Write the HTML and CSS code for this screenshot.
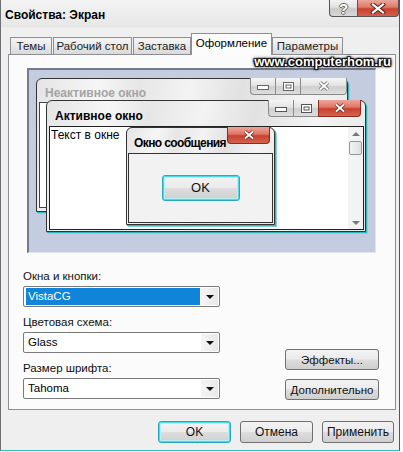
FILE: index.html
```html
<!DOCTYPE html>
<html lang="ru">
<head>
<meta charset="utf-8">
<link rel="stylesheet" href="styles.css">
</head>
<body>
<div class="window">
  <div class="titlebar">
    <span class="title">Свойства: Экран</span>
    <div class="caption">
      <span class="cap help">?</span>
      <span class="cap close">
        <svg width="16" height="11" viewBox="0 0 16 11"><path d="M3 1.5L13 9.5M13 1.5L3 9.5" stroke="#5a2a22" stroke-width="4.2" stroke-linecap="square" fill="none"/><path d="M3 1.5L13 9.5M13 1.5L3 9.5" stroke="#ffffff" stroke-width="2.2" stroke-linecap="square" fill="none"/></svg>
      </span>
    </div>
  </div>
  <div class="client">
    <div class="tabs">
      <span class="tab t1">Темы</span>
      <span class="tab t2">Рабочий стол</span>
      <span class="tab t3">Заставка</span>
      <span class="tab t4 tab-on">Оформление</span>
      <span class="tab t5">Параметры</span>
    </div>
    <div class="panel">
      <div class="watermark">www.computerhom.ru</div>
      <div class="preview">
        <div class="pw pw-inactive">
          <div class="pw-title">Неактивное окно</div>
          <div class="pw-btns">
            <span class="pb min"><svg width="12" height="6" viewBox="0 0 12 6"><rect x="0.5" y="0.5" width="11" height="4" fill="#fff" stroke="#666"/></svg></span>
            <span class="pb max"><svg width="11" height="9" viewBox="0 0 11 9"><rect x="0.5" y="0.5" width="10" height="8" fill="#fff" stroke="#666"/><rect x="3" y="3" width="5" height="3" fill="none" stroke="#666"/></svg></span>
            <span class="pb cls"><svg width="14" height="10" viewBox="0 0 14 10"><path d="M3 1.5L11 8.5M11 1.5L3 8.5" stroke="#666" stroke-width="3.6" fill="none"/><path d="M3 1.5L11 8.5M11 1.5L3 8.5" stroke="#fff" stroke-width="1.8" fill="none"/></svg></span>
          </div>
          <div class="pw-body"></div>
        </div>
        <div class="pw pw-active">
          <div class="pw-title">Активное окно</div>
          <div class="pw-btns">
            <span class="pb min"><svg width="12" height="6" viewBox="0 0 12 6"><rect x="0.5" y="0.5" width="11" height="4" fill="#fff" stroke="#555"/></svg></span>
            <span class="pb max"><svg width="11" height="9" viewBox="0 0 11 9"><rect x="0.5" y="0.5" width="10" height="8" fill="#fff" stroke="#555"/><rect x="3" y="3" width="5" height="3" fill="none" stroke="#555"/></svg></span>
            <span class="pb cls red"><svg width="14" height="10" viewBox="0 0 14 10"><path d="M3 1.5L11 8.5M11 1.5L3 8.5" stroke="#6b2a20" stroke-width="3.6" fill="none"/><path d="M3 1.5L11 8.5M11 1.5L3 8.5" stroke="#fff" stroke-width="1.8" fill="none"/></svg></span>
          </div>
          <div class="pw-body textarea">
            <span class="wtext">Текст в окне</span>
            <div class="scroll">
              <span class="arr up"></span>
              <span class="thumb"></span>
              <span class="arr down"></span>
            </div>
          </div>
        </div>
        <div class="pw pw-msg">
          <div class="pw-title">Окно сообщения</div>
          <div class="pw-btns">
            <span class="pb cls red wide"><svg width="14" height="10" viewBox="0 0 14 10"><path d="M3 1.5L11 8.5M11 1.5L3 8.5" stroke="#6b2a20" stroke-width="3.6" fill="none"/><path d="M3 1.5L11 8.5M11 1.5L3 8.5" stroke="#fff" stroke-width="1.8" fill="none"/></svg></span>
          </div>
          <div class="pw-body msgbody">
            <span class="btn default okmini">OK</span>
          </div>
        </div>
      </div>
      <div class="form">
        <div class="fields">
          <div class="field">
            <div class="label">Окна и кнопки:</div>
            <div class="select"><span class="value selected">VistaCG</span><span class="drop"></span></div>
          </div>
          <div class="field">
            <div class="label">Цветовая схема:</div>
            <div class="select"><span class="value">Glass</span><span class="drop"></span></div>
          </div>
          <div class="field">
            <div class="label">Размер шрифта:</div>
            <div class="select"><span class="value">Tahoma</span><span class="drop"></span></div>
          </div>
        </div>
        <div class="side-btns">
          <span class="btn side">Эффекты...</span>
          <span class="btn side">Дополнительно</span>
        </div>
      </div>
    </div>
    <div class="footer">
      <span class="btn foot default">OK</span>
      <span class="btn foot">Отмена</span>
      <span class="btn foot">Применить</span>
    </div>
  </div>
</div>
</body>
</html>
```
FILE: styles.css
```css
html, body {
  margin: 0;
  padding: 0;
  background: #ffffff;
}
body {
  width: 403px;
  height: 452px;
  overflow: hidden;
  font-family: "Liberation Sans", Arial, sans-serif;
  font-size: 11.5px;
  color: #000;
}
.window {
  width: 398px;
  height: 450px;
  border-left: 1px solid #6f6f6f;
  border-right: 1px solid #555;
  border-bottom: 1px solid #36b8bf;
  background: linear-gradient(180deg, #f4f4f4 0px, #e6e6e6 27px, #efefef 28px, #efefef 100%);
  display: flex;
  flex-direction: column;
}
.titlebar {
  height: 27px;
  display: flex;
  align-items: flex-start;
}
.title {
  font-weight: bold;
  font-size: 12px;
  margin: 8px 0 0 4px;
  line-height: 14px;
}
.caption {
  margin-left: auto;
  display: flex;
}
.cap {
  height: 17px;
  border: 1px solid #555;
  border-top: none;
  display: flex;
  align-items: center;
  justify-content: center;
  box-sizing: border-box;
}
.help {
  width: 28px;
  border-radius: 0 0 0 4px;
  border-right: none;
  background: linear-gradient(180deg, #f3f3f3 0%, #e2e2e2 45%, #c9c9c9 55%, #d8d8d8 100%);
  color: #fff;
  font-weight: bold;
  font-size: 15px;
  line-height: 17px;
  text-shadow: 1px 0 0 #666, -1px 0 0 #666, 0 1px 0 #666, 0 -1px 0 #666;
}
.close {
  width: 42px;
  border-radius: 0 0 4px 0;
  background: linear-gradient(180deg, #eaa89c 0%, #e07a67 45%, #c9412d 55%, #d2614a 100%);
}
.client {
  flex: 1;
  display: flex;
  flex-direction: column;
}
.tabs {
  display: flex;
  align-items: flex-end;
  height: 27px;
  padding-left: 9px;
  position: relative;
  z-index: 2;
}
.tab {
  height: 17px;
  line-height: 16px;
  box-sizing: border-box;
  border: 1px solid #8d8f94;
  border-bottom: none;
  background: linear-gradient(180deg, #f5f5f5 0%, #e9e9e9 50%, #d9d9d9 100%);
  text-align: center;
  margin-right: 1px;
  color: #222;
}
.tab.t1 { width: 42px; }
.tab.t2 { width: 79px; }
.tab.t3 { width: 58px; margin-right: 0; }
.tab.t4 { width: 81px; }
.tab.t5 { width: 71px; }
.tab.tab-on {
  height: 22px;
  line-height: 19px;
  background: #fcfcfc;
  margin-bottom: -1px;
  margin-right: 0;
  color: #000;
}
.panel {
  width: 388px;
  height: 356px;
  box-sizing: border-box;
  margin-left: 7px;
  border: 1px solid #8d8f94;
  background: #fbfbfb;
  position: relative;
  display: flex;
  flex-direction: column;
}
.watermark {
  position: absolute;
  top: 0;
  right: 4px;
  font-weight: bold;
  font-size: 13px;
  line-height: 13px;
  color: #fff;
  z-index: 3;
  text-shadow: 1px 1px 1px #000, -1px -1px 1px #000, 1px -1px 1px #000, -1px 1px 1px #000, 0 0 3px #000, 0 0 4px #222;
}
.preview {
  margin: 13px 0 0 18px;
  width: 349px;
  height: 185px;
  box-sizing: border-box;
  border-left: 2px solid #75798a;
  border-top: 2px solid #75798a;
  border-right: 1px solid #e2e4ea;
  border-bottom: 1px solid #e2e4ea;
  background: #c4cce0;
  position: relative;
}
.pw {
  position: absolute;
  box-sizing: border-box;
  border: 1px solid #333;
  border-radius: 6px 6px 0 0;
  background: linear-gradient(105deg, #e4e4e4 0%, #f6f6f6 18%, #e6e6e6 30%, #f3f3f3 45%, #e1e1e1 60%, #f4f4f4 78%, #e6e6e6 100%);
  box-shadow: 1px 1px 0 #32b5b8, 2px 2px 0 #7fd6d8;
  display: flex;
  flex-direction: column;
}
.pw-title {
  height: 25px;
  box-sizing: border-box;
  padding: 8px 0 0 6px;
  font-weight: bold;
  font-size: 12px;
  line-height: 14px;
  white-space: nowrap;
}
.pw-inactive {
  left: 7px;
  top: 8px;
  width: 312px;
  height: 134px;
  padding: 0 1px 3px 2px;
}
.pw-inactive .pw-title {
  color: #a4a4a4;
  height: 23px;
  padding-top: 7px;
}
.pw-inactive .pw-body {
  flex: 1;
  border: 1px solid #444;
  background: #fff;
}
.pw-active {
  left: 17px;
  top: 30px;
  width: 320px;
  height: 132px;
  padding: 0 1px 1px 2px;
}
.pw-msg {
  left: 97px;
  top: 57px;
  width: 149px;
  height: 98px;
  padding: 0 1px 1px 1px;
}
.pw-msg .pw-title {
  letter-spacing: -0.6px;
}
.pw-btns {
  position: absolute;
  top: -1px;
  right: 4px;
  display: flex;
  z-index: 1;
}
.pw-inactive .pw-btns { right: 0; }
.pb {
  height: 17px;
  box-sizing: border-box;
  border: 1px solid #8a8a8a;
  border-top: none;
  border-right: none;
  background: linear-gradient(180deg, #f6f6f6 0%, #e4e4e4 45%, #cfcfcf 55%, #dedede 100%);
  display: flex;
  align-items: center;
  justify-content: center;
}
.pb.min { width: 25px; border-radius: 0 0 0 4px; align-items: flex-end; padding-bottom: 3px; }
.pb.max { width: 25px; }
.pb.cls { width: 47px; border-right: 1px solid #8a8a8a; border-radius: 0 0 4px 0; }
.pw-active .pb.cls { width: 43px; }
.pb.red {
  border-color: #8c2b20;
  background: linear-gradient(180deg, #eba59a 0%, #e07564 45%, #c8402c 55%, #d4644f 100%);
}
.pb.wide { width: 43px; border-left: 1px solid #8c2b20; border-radius: 0 0 4px 4px; }
.textarea {
  flex: 1;
  border: 1px solid #222;
  background: #fff;
  position: relative;
  display: flex;
}
.wtext {
  padding: 1px 0 0 1px;
  line-height: 14px;
  font-size: 12px;
}
.scroll {
  margin-left: auto;
  width: 15px;
  background: #f3f3f3;
  display: flex;
  flex-direction: column;
  align-items: center;
}
.arr {
  width: 0;
  height: 0;
  border-left: 4px solid transparent;
  border-right: 4px solid transparent;
}
.arr.up {
  margin-top: 5px;
  border-bottom: 4px solid #777;
}
.thumb {
  margin-top: 5px;
  width: 13px;
  height: 14px;
  box-sizing: border-box;
  border: 1px solid #9a9a9a;
  border-radius: 2px;
  background: linear-gradient(90deg, #f4f4f4, #dedede);
}
.arr.down {
  margin-top: auto;
  margin-bottom: 4px;
  border-top: 4px solid #777;
}
.msgbody {
  flex: 1;
  border: 1px solid #333;
  background: #f2f2f2;
  display: flex;
  align-items: center;
  justify-content: center;
}
.btn {
  box-sizing: border-box;
  border: 1px solid #707070;
  border-radius: 3px;
  background: linear-gradient(180deg, #f3f3f3 0%, #ebebeb 48%, #dddddd 52%, #cfcfcf 100%);
  display: flex;
  align-items: center;
  justify-content: center;
  line-height: 14px;
  color: #111;
}
.btn.default {
  border-color: #2aa9bd;
  box-shadow: inset 0 0 0 1px #4fd9e8, inset 0 0 0 2px #b6eef4;
}
.okmini {
  width: 78px;
  height: 26px;
  font-size: 13px;
}
.form {
  flex: 1;
  display: flex;
  justify-content: space-between;
  align-items: flex-end;
  padding: 0 16px 9px 14px;
}
.fields {
  display: flex;
  flex-direction: column;
  gap: 8px;
  padding-bottom: 1px;
}
.label {
  line-height: 14px;
  margin-bottom: 3px;
  color: #111;
}
.select {
  width: 197px;
  height: 21px;
  box-sizing: border-box;
  border: 1px solid #7b7b7b;
  border-radius: 2px;
  background: #fff;
  display: flex;
  padding: 1px 1px 1px 2px;
}
.value {
  flex: 1;
  line-height: 17px;
  padding-left: 2px;
}
.value.selected {
  background: #0f84d8;
  color: #fff;
}
.drop {
  width: 17px;
  margin-left: 1px;
  background: linear-gradient(90deg, #f4f4f4, #e9e9e9);
  display: flex;
  align-items: center;
  justify-content: center;
}
.drop::after {
  content: "";
  width: 0;
  height: 0;
  border-left: 4px solid transparent;
  border-right: 4px solid transparent;
  border-top: 4px solid #111;
}
.side-btns {
  display: flex;
  flex-direction: column;
  gap: 9px;
}
.btn.side {
  width: 94px;
  height: 21px;
}
.footer {
  display: flex;
  justify-content: flex-end;
  gap: 9px;
  padding: 11px 5px 0 0;
}
.btn.foot {
  width: 73px;
  height: 22px;
  font-size: 12px;
}
.btn.foot:last-child { width: 72px; }
```
